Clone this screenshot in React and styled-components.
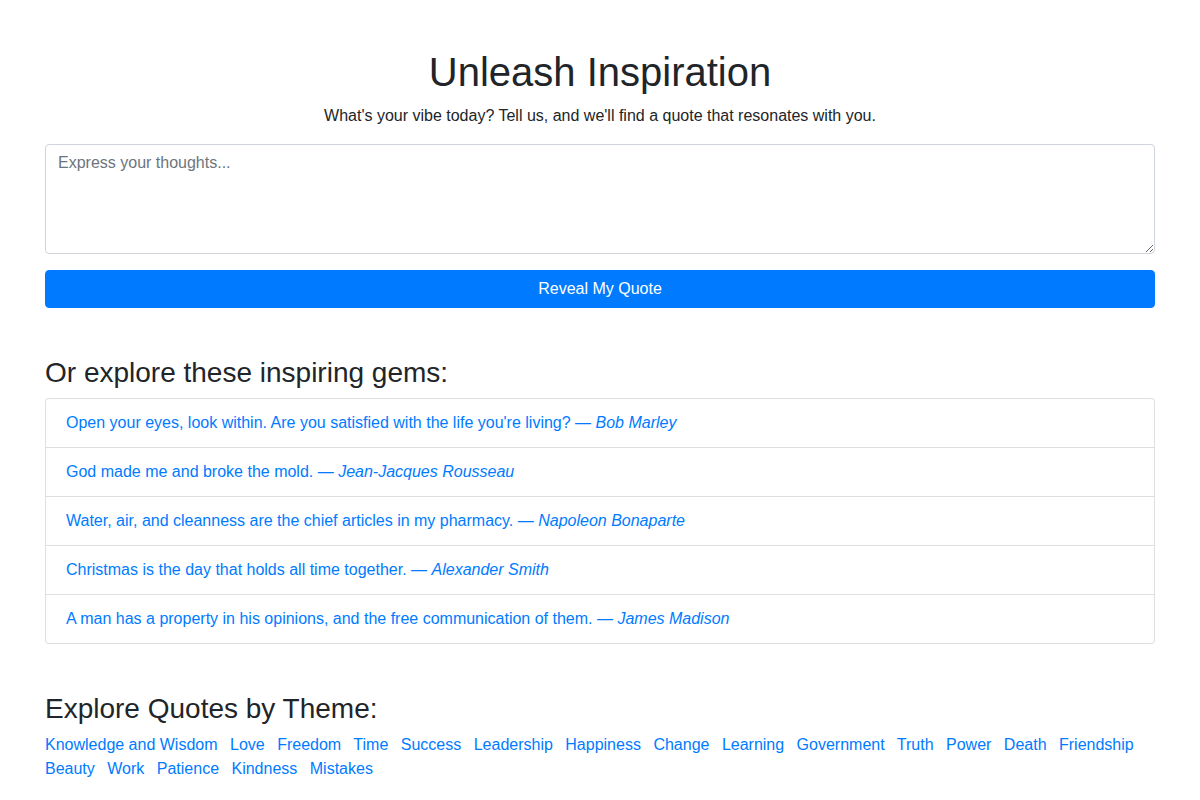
import { useState } from 'react';
import styled, { createGlobalStyle } from 'styled-components';

const GlobalStyle = createGlobalStyle`
  *, *::before, *::after {
    box-sizing: border-box;
  }

  body {
    margin: 0;
    font-family: "Liberation Sans", Arial, sans-serif;
    font-size: 16px;
    line-height: 1.5;
    color: #212529;
    background-color: #fff;
  }
`;

const quotes = [
  { text: "Open your eyes, look within. Are you satisfied with the life you're living?", author: 'Bob Marley' },
  { text: 'God made me and broke the mold.', author: 'Jean-Jacques Rousseau' },
  { text: 'Water, air, and cleanness are the chief articles in my pharmacy.', author: 'Napoleon Bonaparte' },
  { text: 'Christmas is the day that holds all time together.', author: 'Alexander Smith' },
  { text: 'A man has a property in his opinions, and the free communication of them.', author: 'James Madison' },
];

const themes = [
  'Knowledge and Wisdom', 'Love', 'Freedom', 'Time', 'Success', 'Leadership',
  'Happiness', 'Change', 'Learning', 'Government', 'Truth', 'Power', 'Death',
  'Friendship', 'Beauty', 'Work', 'Patience', 'Kindness', 'Mistakes',
];

const App = () => {
  const [thoughts, setThoughts] = useState(''); // what the user typed

  return (
    <>
      <GlobalStyle />
      <Container>
        <Title>Unleash Inspiration</Title>
        <Lead>What's your vibe today? Tell us, and we'll find a quote that resonates with you.</Lead>

        <FormGroup>
          <TextArea
            rows={4}
            placeholder="Express your thoughts..."
            value={thoughts}
            onChange={(e) => setThoughts(e.target.value)}
          />
        </FormGroup>
        <RevealButton type="button">Reveal My Quote</RevealButton>

        <SectionTitle>Or explore these inspiring gems:</SectionTitle>
        <QuoteList>
          {quotes.map((q) => (
            <QuoteItem key={q.author} href="#">
              {q.text} — <em>{q.author}</em>
            </QuoteItem>
          ))}
        </QuoteList>

        <SectionTitle>Explore Quotes by Theme:</SectionTitle>
        <Themes>
          {themes.map((t) => (
            <span key={t}>
              <ThemeLink href="#">{t}</ThemeLink>{' '}
            </span>
          ))}
        </Themes>
      </Container>
    </>
  );
};

const Container = styled.div`
  max-width: 1140px;
  margin: 48px auto 0;
  padding: 0 15px;
`;

const Title = styled.h1`
  margin: 0 0 8px;
  font-size: 40px;
  font-weight: 500;
  line-height: 1.2;
  text-align: center;
`;

const Lead = styled.p`
  margin: 0 0 16px;
  text-align: center;
`;

const FormGroup = styled.div`
  margin-bottom: 16px;
`;

const TextArea = styled.textarea`
  display: block;
  width: 100%;
  padding: 6px 12px;
  font-family: inherit;
  font-size: 16px;
  line-height: 1.5;
  color: #495057;
  background-color: #fff;
  border: 1px solid #ced4da;
  border-radius: 4px;
  outline: none;

  &::placeholder {
    color: #6c757d;
  }
`;

const RevealButton = styled.button`
  display: block;
  width: 100%;
  padding: 6px 12px;
  font-family: inherit;
  font-size: 16px;
  line-height: 1.5;
  color: #fff;
  background-color: #007bff;
  border: 1px solid #007bff;
  border-radius: 4px;
  cursor: pointer;

  &:hover {
    background-color: #0069d9;
  }
`;

const SectionTitle = styled.h3`
  margin: 48px 0 8px;
  font-size: 28px;
  font-weight: 500;
  line-height: 1.2;
`;

const QuoteList = styled.div`
  display: flex;
  flex-direction: column;
  border-radius: 4px;
`;

const QuoteItem = styled.a`
  display: block;
  padding: 12px 20px;
  margin-bottom: -1px;
  color: #007bff;
  text-decoration: none;
  background-color: #fff;
  border: 1px solid rgba(0, 0, 0, 0.125);

  &:first-child {
    border-top-left-radius: 4px;
    border-top-right-radius: 4px;
  }

  &:last-child {
    margin-bottom: 0;
    border-bottom-left-radius: 4px;
    border-bottom-right-radius: 4px;
  }

  &:hover {
    background-color: #f8f9fa;
  }
`;

const Themes = styled.div`
  margin-bottom: 16px;
`;

const ThemeLink = styled.a`
  margin-right: 8px;
  color: #007bff;
  text-decoration: none;

  &:hover {
    text-decoration: underline;
  }
`;

export default App;
